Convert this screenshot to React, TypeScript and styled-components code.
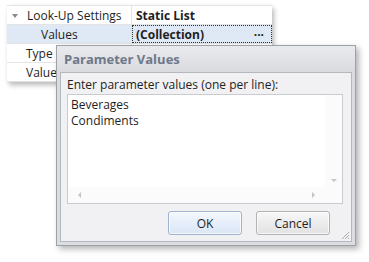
import React from "react";
import styled, { createGlobalStyle } from "styled-components";

const GlobalStyle = createGlobalStyle`
  html, body {
    margin: 0;
    padding: 0;
    background: #ffffff;
  }
  body {
    font-family: "Open Sans", "DejaVu Sans", sans-serif;
    font-size: 12px;
    color: #1e1e1e;
  }
`;

const Page = styled.div`
  position: relative;
  width: 369px;
  height: 262px;
  overflow: hidden;
  padding: 5px 0 0 7px;
  box-sizing: border-box;
`;

const Grid = styled.div`
  width: 265px;
  background: #ffffff;
  border-top: 1px solid #e4e4e4;
  box-shadow: 2px 3px 5px rgba(0, 0, 0, 0.28);
`;

const Row = styled.div<{ $selected?: boolean }>`
  display: grid;
  grid-template-columns: 125px 1fr;
  height: 18px;
  border-bottom: 1px solid #e4e4e4;
  background: ${(p) => (p.$selected ? "#dfe8f5" : "#ffffff")};
`;

const NameCell = styled.div<{ $indent: number }>`
  display: flex;
  align-items: center;
  padding-left: ${(p) => p.$indent}px;
  border-right: 1px solid #e4e4e4;
  white-space: nowrap;
`;

const Expander = styled.span`
  width: 0;
  height: 0;
  border-left: 3px solid transparent;
  border-right: 3px solid transparent;
  border-top: 4px solid #8a8a8a;
  margin: 1px 9px 0 5px;
`;

const ValueCell = styled.div<{ $focused?: boolean }>`
  display: flex;
  align-items: center;
  justify-content: space-between;
  padding: 0 8px 0 4px;
  font-weight: 700;
  white-space: nowrap;
  outline: ${(p) => (p.$focused ? "1px dotted #333" : "none")};
  outline-offset: -1px;
`;

const Ellipsis = styled.span`
  font-weight: 700;
`;

const Dialog = styled.div`
  position: absolute;
  left: 56px;
  top: 45px;
  width: 300px;
  height: 201px;
  box-sizing: border-box;
  border: 1px solid #9da1a8;
  background: linear-gradient(#e9eaed, #d9dbdf 26px, #dcdde1);
  box-shadow: 3px 3px 6px rgba(0, 0, 0, 0.3);
  display: flex;
  flex-direction: column;
  padding: 0 3px 3px 3px;
`;

const TitleBar = styled.div`
  height: 26px;
  display: flex;
  align-items: center;
  padding-left: 4px;
  font-weight: 700;
  font-size: 13px;
  color: #6e7889;
`;

const Client = styled.div`
  flex: 1;
  position: relative;
  border: 1px solid #b3b7be;
  background-color: #f1f1f3;
  background-image: radial-gradient(#e6e7ea 0.6px, transparent 0.7px);
  background-size: 2px 2px;
  padding: 3px 8px 6px 6px;
  display: flex;
  flex-direction: column;
`;

const Label = styled.div`
  height: 16px;
  display: flex;
  align-items: center;
  white-space: nowrap;
`;

const TextArea = styled.div`
  margin-top: 2px;
  height: 108px;
  border: 1px solid #c9cbcf;
  background: #ffffff;
  display: grid;
  grid-template-columns: 1fr 17px;
  grid-template-rows: 1fr 16px;
`;

const Lines = styled.div`
  padding: 2px 0 0 3px;
  display: flex;
  flex-direction: column;
`;

const Line = styled.div`
  height: 16px;
  line-height: 16px;
`;

const VScroll = styled.div`
  display: flex;
  align-items: flex-end;
  justify-content: center;
  padding-bottom: 5px;
  background: #fbfbfb;
`;

const HScroll = styled.div`
  display: flex;
  align-items: center;
  justify-content: space-between;
  padding: 0 10px;
  background: #fbfbfb;
`;

const Corner = styled.div`
  background: #fbfbfb;
`;

const Arrow = styled.span<{ $dir: "down" | "left" | "right" }>`
  width: 0;
  height: 0;
  ${(p) =>
    p.$dir === "down"
      ? "border-left: 3px solid transparent; border-right: 3px solid transparent; border-top: 3px solid #c4c4c4;"
      : p.$dir === "left"
      ? "border-top: 3px solid transparent; border-bottom: 3px solid transparent; border-right: 3px solid #c4c4c4;"
      : "border-top: 3px solid transparent; border-bottom: 3px solid transparent; border-left: 3px solid #c4c4c4;"}
`;

const Buttons = styled.div`
  margin-top: auto;
  display: flex;
  justify-content: flex-end;
  gap: 14px;
  padding-right: 13px;
`;

const Button = styled.button<{ $default?: boolean }>`
  width: 74px;
  height: 24px;
  border-radius: 3px;
  font-family: "Open Sans", "DejaVu Sans", sans-serif;
  font-size: 12px;
  color: #1e1e1e;
  border: 1px solid ${(p) => (p.$default ? "#9fb3cf" : "#b2b2b2")};
  background: ${(p) =>
    p.$default
      ? "linear-gradient(#f4f8fd, #e6eefa 50%, #dae5f5)"
      : "linear-gradient(#f8f8f8, #ececec 50%, #e2e2e2)"};
  box-shadow: inset 0 0 0 1px rgba(255, 255, 255, 0.7);
  padding: 0;
`;

const Grip = styled.svg`
  position: absolute;
  right: 1px;
  bottom: 1px;
`;

const rows = [
  { name: "Look-Up Settings", value: "Static List", indent: 0, expander: true },
  { name: "Values", value: "(Collection)", indent: 34, selected: true },
  { name: "Type", value: "", indent: 19 },
  { name: "Value", value: "", indent: 19 },
];

const values = ["Beverages", "Condiments"];

export default function App() {
  return (
    <>
      <GlobalStyle />
      <Page>
        <Grid>
          {rows.map((r) => (
            <Row key={r.name} $selected={r.selected}>
              <NameCell $indent={r.indent}>
                {r.expander && <Expander />}
                {r.name}
              </NameCell>
              <ValueCell $focused={r.selected}>
                <span>{r.value}</span>
                {r.selected && <Ellipsis>···</Ellipsis>}
              </ValueCell>
            </Row>
          ))}
        </Grid>
        <Dialog>
          <TitleBar>Parameter Values</TitleBar>
          <Client>
            <Label>Enter parameter values (one per line):</Label>
            <TextArea>
              <Lines>
                {values.map((v) => (
                  <Line key={v}>{v}</Line>
                ))}
              </Lines>
              <VScroll>
                <Arrow $dir="down" />
              </VScroll>
              <HScroll>
                <Arrow $dir="left" />
                <Arrow $dir="right" />
              </HScroll>
              <Corner />
            </TextArea>
            <Buttons>
              <Button $default>OK</Button>
              <Button>Cancel</Button>
            </Buttons>
            <Grip width="10" height="10" viewBox="0 0 10 10">
              <path d="M9 2 L2 9 M9 5 L5 9 M9 8 L8 9" stroke="#a9adb3" strokeWidth="1" />
            </Grip>
          </Client>
        </Dialog>
      </Page>
    </>
  );
}
